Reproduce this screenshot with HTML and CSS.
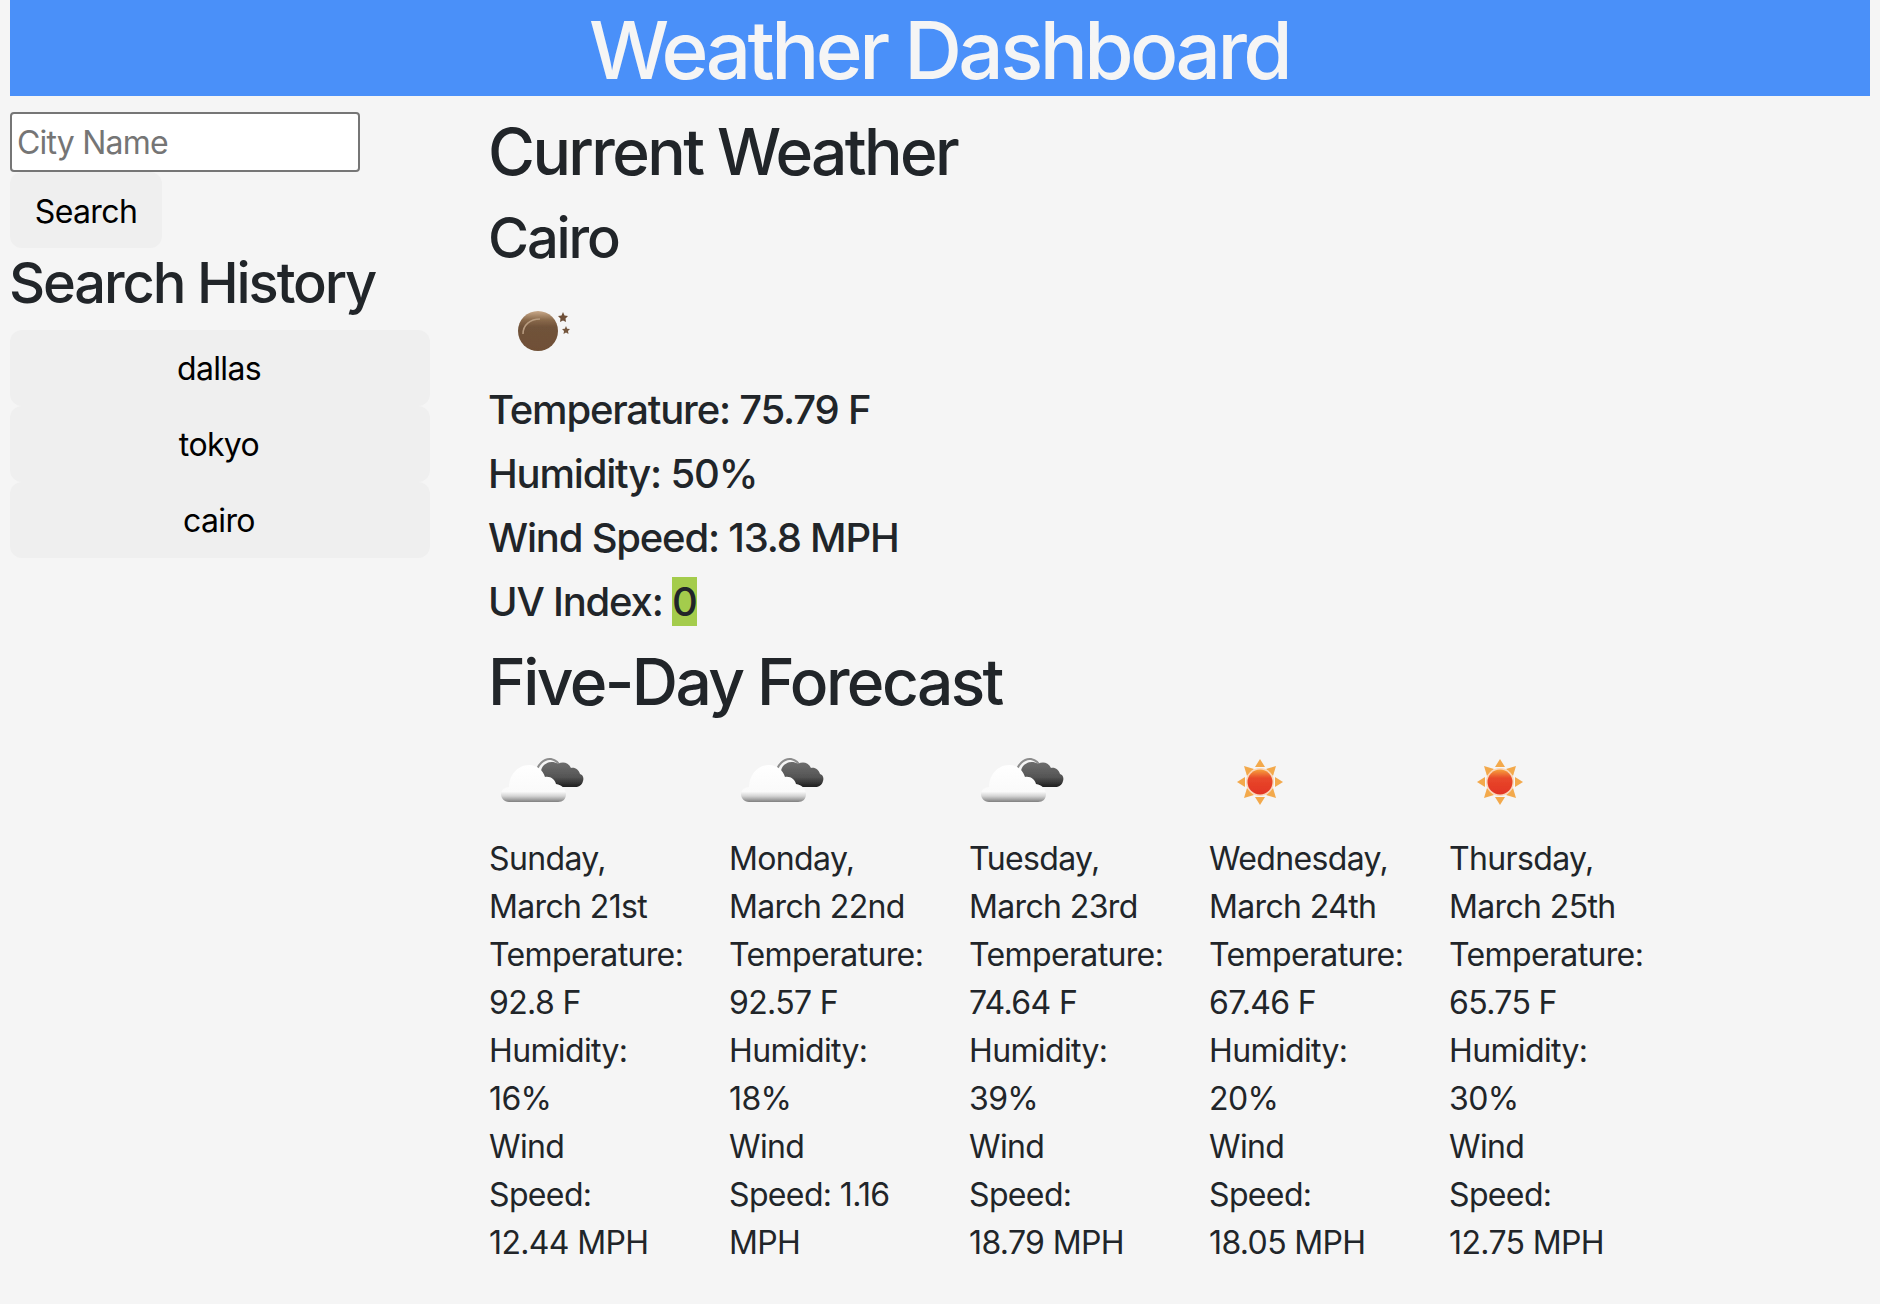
FILE: index.html
```html
<!DOCTYPE html>
<html>
<head>
    <meta charset="UTF-8" />
    <title>Weather Dashboard</title>
    <link rel="stylesheet" href="styles.css">
</head>
<body>
    <svg class="defs" width="0" height="0">
        <defs>
            <filter id="soft"><feGaussianBlur stdDeviation="0.7" /></filter>
            <linearGradient id="moon-fill" x1="0" y1="0" x2="0" y2="1">
                <stop offset="0" stop-color="#c9a98a" />
                <stop offset="0.22" stop-color="#8a6a4c" />
                <stop offset="0.4" stop-color="#70523a" />
                <stop offset="1" stop-color="#6f5036" />
            </linearGradient>
            <linearGradient id="white-cloud" x1="0" y1="0" x2="0" y2="1">
                <stop offset="0" stop-color="#ffffff" />
                <stop offset="0.72" stop-color="#fafafa" />
                <stop offset="0.84" stop-color="#d4d4d4" />
                <stop offset="1" stop-color="#7f7f7f" />
            </linearGradient>
            <linearGradient id="dark-cloud" x1="0" y1="0" x2="0" y2="1">
                <stop offset="0" stop-color="#6e6e6e" />
                <stop offset="0.6" stop-color="#555555" />
                <stop offset="1" stop-color="#1e1e1e" />
            </linearGradient>
            <linearGradient id="sun-fill" x1="0" y1="0" x2="0" y2="1">
                <stop offset="0" stop-color="#f6a13c" />
                <stop offset="0.35" stop-color="#e8482a" />
                <stop offset="1" stop-color="#e23424" />
            </linearGradient>
            <symbol id="icon-moon" viewBox="0 0 100 100">
                <g filter="url(#soft)">
                    <circle cx="50" cy="43" r="20" fill="url(#moon-fill)" />
                    <path d="M35 46c0-9 7-15 17-15" fill="none" stroke="#b89c80" stroke-width="1.5" />
                    <polygon points="75,24 76.5,27.5 80,28 77.5,30.5 78,34 75,32.5 72,34 72.5,30.5 70,28 73.5,27.5" fill="#6e5038" />
                    <polygon points="78,38 79.2,40.7 82,41 80,43 80.5,46 78,44.6 75.5,46 76,43 74,41 76.8,40.7" fill="#75573e" />
                </g>
            </symbol>
            <symbol id="icon-cloud" viewBox="0 0 100 100">
                <g filter="url(#soft)">
                    <path d="M47 39c1-9 8-16 15-15 5 1 8 4 9 8" fill="none" stroke="#8d8d8d" stroke-width="2" />
                    <path d="M52 37c0-8 10-13 17-8 5-3 11-1 13 4 4-1 8 2 9 6 3 1 4 4 3 7-1 4-4 6-8 6H72c-7 0-10-5-12-8-5 0-8-3-8-7z" fill="url(#dark-cloud)" />
                    <path d="M20 67c-5 0-8-4-8-8s4-7 8-7c0-11 8-22 20-22 8 0 14 5 16 12 6-1 10 3 11 7 6 1 10 5 10 10 0 5-3 8-8 8z" fill="url(#white-cloud)" />
                </g>
            </symbol>
            <symbol id="icon-sun" viewBox="0 0 100 100">
                <g filter="url(#soft)" fill="#f3a94c">
                    <polygon points="51,24 56,32 46,32" />
                    <polygon points="51,70 56,62 46,62" />
                    <polygon points="28,47 36,42 36,52" />
                    <polygon points="74,47 66,42 66,52" />
                    <polygon points="35,31 45,34 38,41" />
                    <polygon points="67,31 57,34 64,41" />
                    <polygon points="35,63 38,53 45,60" />
                    <polygon points="67,63 64,53 57,60" />
                    <circle cx="51" cy="47" r="14" fill="#fbd6b8" />
                    <circle cx="51" cy="47" r="12.5" fill="url(#sun-fill)" />
                </g>
            </symbol>
        </defs>
    </svg>

    <header class="page-header">Weather Dashboard</header>

    <div class="layout">
        <aside class="sidebar">
            <input class="city-input" type="text" placeholder="City Name" />
            <button class="search-btn" type="button">Search</button>
            <h3 class="history-title">Search History</h3>
            <ul class="history">
                <li><button type="button">dallas</button></li>
                <li><button type="button">tokyo</button></li>
                <li><button type="button">cairo</button></li>
            </ul>
        </aside>

        <main class="main">
            <h2>Current Weather</h2>
            <h3>Cairo</h3>
            <svg class="icon"><use href="#icon-moon" /></svg>
            <h5>Temperature: 75.79 F</h5>
            <h5>Humidity: 50%</h5>
            <h5>Wind Speed: 13.8 MPH</h5>
            <h5>UV Index: <span class="uv">0</span></h5>
            <h2 class="forecast-title">Five-Day Forecast</h2>
            <div class="forecast">
                <div class="day">
                    <svg class="icon"><use href="#icon-cloud" /></svg>
                    <p>Sunday, March 21st</p>
                    <p>Temperature: 92.8 F</p>
                    <p>Humidity: 16%</p>
                    <p class="wind">Wind<br>Speed: 12.44 MPH</p>
                </div>
                <div class="day">
                    <svg class="icon"><use href="#icon-cloud" /></svg>
                    <p>Monday, March 22nd</p>
                    <p>Temperature: 92.57 F</p>
                    <p>Humidity: 18%</p>
                    <p class="wind">Wind<br>Speed: 1.16 MPH</p>
                </div>
                <div class="day">
                    <svg class="icon"><use href="#icon-cloud" /></svg>
                    <p>Tuesday, March 23rd</p>
                    <p>Temperature: 74.64 F</p>
                    <p>Humidity: 39%</p>
                    <p class="wind">Wind<br>Speed: 18.79 MPH</p>
                </div>
                <div class="day">
                    <svg class="icon"><use href="#icon-sun" /></svg>
                    <p>Wednesday, March 24th</p>
                    <p>Temperature: 67.46 F</p>
                    <p>Humidity: 20%</p>
                    <p class="wind">Wind<br>Speed: 18.05 MPH</p>
                </div>
                <div class="day">
                    <svg class="icon"><use href="#icon-sun" /></svg>
                    <p>Thursday, March 25th</p>
                    <p>Temperature: 65.75 F</p>
                    <p>Humidity: 30%</p>
                    <p class="wind">Wind<br>Speed: 12.75 MPH</p>
                </div>
            </div>
        </main>
    </div>
</body>
</html>
```

FILE: styles.css
```css
body {
    font-family: Inter, "Liberation Sans", sans-serif;
    background: #f5f5f5;
    color: #212529;
    margin: 0;
    padding: 0 10px;
    font-size: 32px;
    line-height: 48px;
    letter-spacing: -0.02em;
}
.defs {
    display: block;
}
.page-header {
    background: #4a90f9;
    color: #f5f5f5;
    height: 96px;
    line-height: 100px;
    padding-right: 2px;
    text-align: center;
    font-size: 80px;
    font-weight: 550;
    letter-spacing: -0.045em;
}
.layout {
    display: flex;
}
.sidebar {
    width: 420px;
    margin-right: 58px;
    padding-top: 16px;
}
.city-input {
    display: block;
    box-sizing: border-box;
    width: 350px;
    height: 60px;
    padding: 1px 5px 0;
    border: 2px solid #767676;
    border-radius: 4px;
    background: #fff;
    font-family: inherit;
    font-size: 32px;
    letter-spacing: -0.025em;
}
.city-input::placeholder {
    color: #757575;
}
button {
    display: block;
    border: none;
    border-radius: 12px;
    background: #efefef;
    color: #000;
    font-family: inherit;
    font-size: 32px;
    line-height: 48px;
    letter-spacing: -0.02em;
    padding: 15px 2px 13px 0;
    height: 76px;
}
.search-btn {
    width: 152px;
    padding: 16px 0 12px;
}
h2, h3, h5 {
    margin: 0 0 16px;
    font-weight: 550;
    line-height: 1.2;
}
h2 {
    font-size: 64px;
    letter-spacing: -0.04em;
}
h3 {
    font-size: 56px;
    letter-spacing: -0.038em;
}
h5 {
    font-size: 40px;
    letter-spacing: -0.03em;
}
.history-title {
    margin: 2px 0 13px -1px;
}
.history {
    list-style: none;
    margin: 0;
    padding: 0;
}
.history button {
    width: 100%;
}
.main {
    flex: 1;
    padding-top: 18px;
}
.main > h2:first-child {
    margin-bottom: 14px;
}
.icon {
    display: block;
    width: 100px;
    height: 100px;
}
.main > .icon {
    margin-bottom: -2px;
}
.uv {
    background: #a4cc4c;
}
.forecast-title {
    margin-top: 18px;
    margin-bottom: 15px;
}
.forecast {
    display: flex;
    margin-top: -1px;
    margin-left: 1px;
}
.day {
    width: 240px;
}
.day p {
    margin: 0;
    width: 194px;
}
.day .wind {
    width: 180px;
}
```
